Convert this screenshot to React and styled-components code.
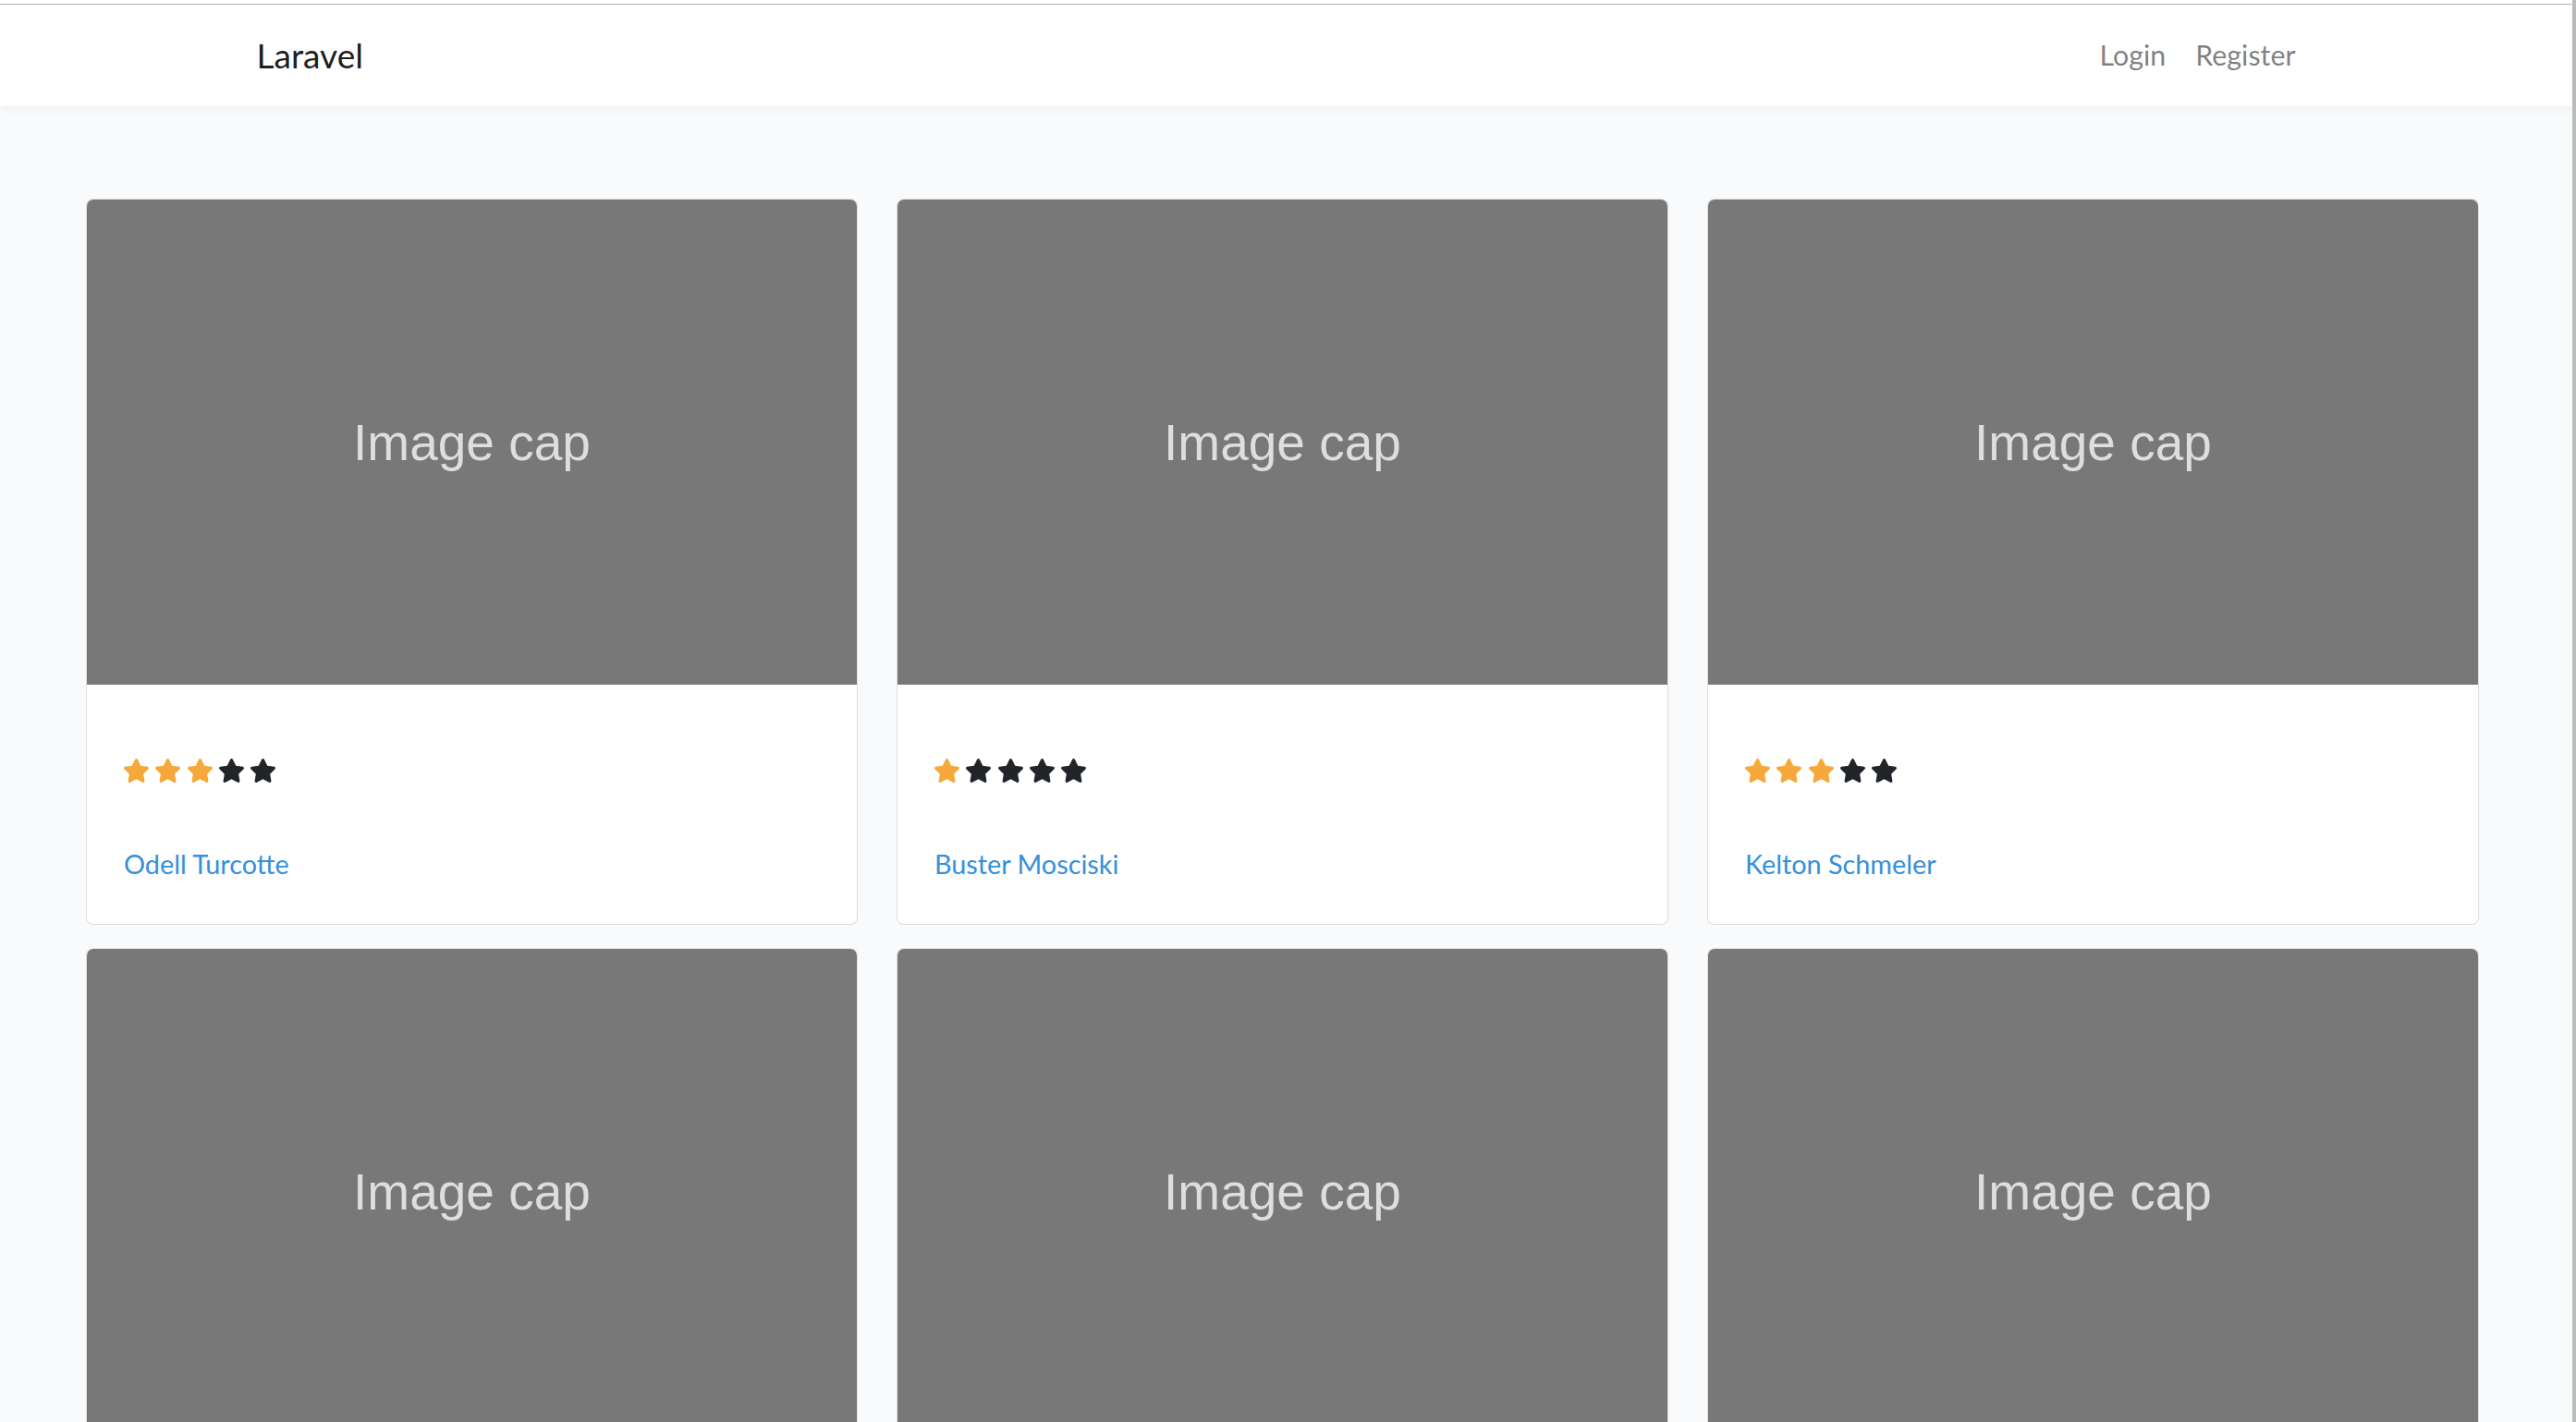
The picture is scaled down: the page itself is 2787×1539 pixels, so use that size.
import React from "react";
import styled, { createGlobalStyle } from "styled-components";

const GlobalStyle = createGlobalStyle`
  html, body {
    margin: 0;
    padding: 0;
    background: #f8fafc;
  }
  body {
    font-family: "Nunito", "Lato", "Open Sans", sans-serif;
    color: #212529;
    -webkit-font-smoothing: antialiased;
  }
  * { box-sizing: border-box; }
`;

const Frame = styled.div`
  display: flex;
  min-height: 100vh;
  width: 2787px;
`;

const Page = styled.div`
  flex: 1;
  min-width: 0;
  display: flex;
  flex-direction: column;
`;

const WindowEdge = styled.div`
  width: 4px;
  flex: none;
  background: #bcbcbc;
`;

const TopStrip = styled.div`
  height: 5px;
  background: #ffffff;
  border-bottom: 1px solid #b4b4b4;
`;

const Navbar = styled.nav`
  height: 110px;
  background: #ffffff;
  box-shadow: 0 4px 8px rgba(0, 0, 0, 0.04);
  display: flex;
  justify-content: center;
  position: relative;
  z-index: 1;
`;

const NavContainer = styled.div`
  width: 2280px;
  padding: 0 32px 0 26px;
  display: flex;
  align-items: center;
  justify-content: space-between;
`;

const Brand = styled.a`
  font-family: "Lato", sans-serif;
  font-size: 37px;
  color: rgba(0, 0, 0, 0.9);
  text-decoration: none;
  line-height: 1.5;
`;

const NavLinks = styled.ul`
  display: flex;
  list-style: none;
  margin: 0;
  padding: 0;
  transform: translateY(-1px);
`;

const NavLink = styled.a`
  display: block;
  padding: 0 16px;
  font-family: "Lato", sans-serif;
  font-size: 30.4px;
  line-height: 1.6;
  color: rgba(0, 0, 0, 0.5);
  text-decoration: none;
`;

const Content = styled.main`
  padding: 100px 101px 48px 93px;
`;

const Grid = styled.div`
  display: grid;
  grid-template-columns: repeat(3, 1fr);
  column-gap: 42px;
  row-gap: 25px;
`;

const Card = styled.div`
  background: #ffffff;
  border: 1px solid rgba(0, 0, 0, 0.125);
  border-radius: 8px;
  overflow: hidden;
  display: flex;
  flex-direction: column;
`;

const ImageCap = styled.div`
  height: 525px;
  background: #787878;
  display: flex;
  align-items: center;
  justify-content: center;
  font-family: "Liberation Sans", Arial, sans-serif;
  font-size: 55px;
  color: #dedede;
`;

const CardBody = styled.div`
  padding: 40px 40px 42px;
  display: flex;
  flex-direction: column;
  align-items: flex-start;
`;

const Stars = styled.div`
  display: flex;
  gap: 7.3px;
  margin-top: 40px;
  height: 26px;
`;

const StarSvg = styled.svg`
  width: 27px;
  height: 26px;
  display: block;
  fill: ${(p) => (p.$on ? "#f6a83b" : "#212529")};
`;

const Name = styled.a`
  margin-top: 65px;
  font-family: "Lato", sans-serif;
  font-size: 28.8px;
  line-height: 46px;
  color: #3490dc;
  text-decoration: none;
`;

const Star = ({ on }) => (
  <StarSvg $on={on} viewBox="20 0 536 512" aria-hidden="true">
    <path d="M259.3 17.8L194 150.2 47.9 171.5c-26.2 3.8-36.7 36.1-17.7 54.6l105.7 103-25 145.5c-4.5 26.3 23.2 46 46.4 33.7L288 439.6l130.7 68.7c23.2 12.2 50.9-7.4 46.4-33.7l-25-145.5 105.7-103c19-18.5 8.5-50.8-17.7-54.6L382 150.2 316.7 17.8c-11.7-23.6-45.6-23.9-57.4 0z" />
  </StarSvg>
);

const people = [
  { name: "Odell Turcotte", rating: 3 },
  { name: "Buster Mosciski", rating: 1 },
  { name: "Kelton Schmeler", rating: 3 },
  { name: "Lonny Hermiston", rating: 4 },
  { name: "Aylin Kuhlman", rating: 2 },
  { name: "Mekhi Bartell", rating: 5 },
];

export default function App() {
  return (
    <>
      <GlobalStyle />
      <Frame>
        <Page>
          <TopStrip />
          <Navbar>
            <NavContainer>
              <Brand href="#">Laravel</Brand>
              <NavLinks>
                <li>
                  <NavLink href="#">Login</NavLink>
                </li>
                <li>
                  <NavLink href="#">Register</NavLink>
                </li>
              </NavLinks>
            </NavContainer>
          </Navbar>
          <Content>
            <Grid>
              {people.map((p) => (
                <Card key={p.name}>
                  <ImageCap>Image cap</ImageCap>
                  <CardBody>
                    <Stars>
                      {[1, 2, 3, 4, 5].map((i) => (
                        <Star key={i} on={i <= p.rating} />
                      ))}
                    </Stars>
                    <Name href="#">{p.name}</Name>
                  </CardBody>
                </Card>
              ))}
            </Grid>
          </Content>
        </Page>
        <WindowEdge />
      </Frame>
    </>
  );
}
